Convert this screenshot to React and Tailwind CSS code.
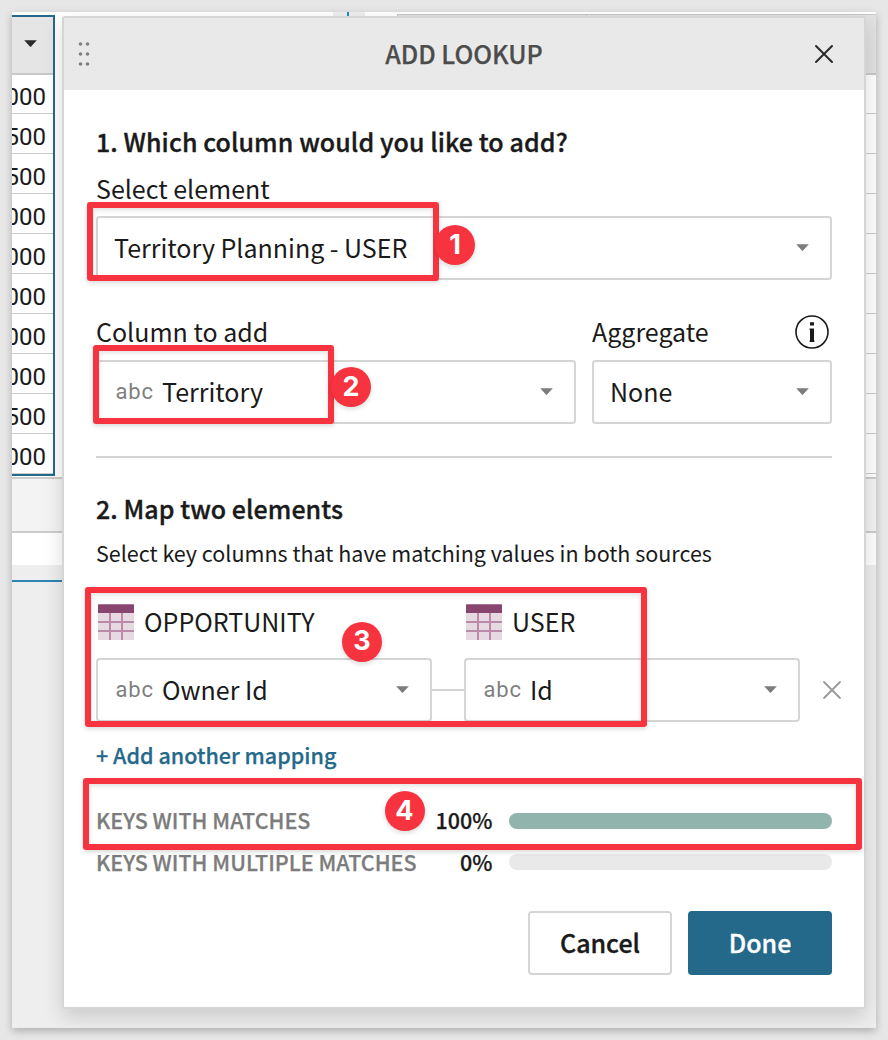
import React from 'react';

const ROWS = ['000', '500', '500', '000', '000', '000', '000', '000', '500', '000'];

function Caret({ className = 'text-[#7c7c7c]' }) {
  return (
    <svg className={`shrink-0 ${className}`} width="13" height="7" viewBox="0 0 13 7" aria-hidden="true">
      <path d="M0.2 0.3H12.8L7.1 6.4Q6.5 7 5.9 6.4Z" fill="currentColor" />
    </svg>
  );
}

function Cross({ className }) {
  return (
    <svg className={className} width="20" height="20" viewBox="0 0 20 20" fill="none" stroke="currentColor" strokeLinecap="round" aria-hidden="true">
      <path d="M2 2L18 18M18 2L2 18" />
    </svg>
  );
}

function TableIcon() {
  return (
    <svg className="ml-0.5 shrink-0" width="36" height="36" viewBox="0 0 36 36" aria-hidden="true">
      <rect width="36" height="36" rx="0.5" fill="#e6d9e2" />
      <path d="M12 9V36M24 9V36M0 18H36M0 27H36" stroke="#b98aaa" strokeWidth="2" />
      <rect width="36" height="9" fill="#88456e" />
      <path d="M0 0.5H36" stroke="#a87797" strokeWidth="1" />
    </svg>
  );
}

function InfoIcon() {
  return (
    <svg className="mt-0.5 mr-[3px]" width="34" height="34" viewBox="0 0 34 34" aria-hidden="true">
      <circle cx="17" cy="17" r="16" fill="none" stroke="#1a1a1a" strokeWidth="1.6" />
      <path d="M15 7.2H19V10.4H15ZM14.6 13.6H19V25.4H19.4V27H14.6V25.6H15V15H14.6Z" fill="#1a1a1a" />
    </svg>
  );
}

function Select({ type, value, className }) {
  return (
    <div className={`flex h-16 items-center rounded border-2 border-[#d5d5d5] bg-white pr-[21.5px] pl-4 pb-0.5 ${className}`}>
      {type && (
        <span className="w-12 shrink-0 pt-0.5 pl-[1.5px] font-[Roboto,sans-serif] text-[22px] leading-7 tracking-[0.8px] text-[#7f7f7f]">
          {type}
        </span>
      )}
      <span className="flex-1 leading-8">{value}</span>
      <Caret className="mt-px text-[#7c7c7c]" />
    </div>
  );
}

function MatchRow({ label, percent, fill, textClass = '' }) {
  return (
    <div className="flex h-7 items-center text-[21.5px] leading-7 font-medium [-webkit-text-stroke:0.25px]">
      <span className={`flex-1 text-[#7c7c7c] ${textClass}`}>{label}</span>
      <span className={textClass}>{percent}</span>
      <span className={`mt-0.5 ml-[16.5px] h-4 w-[323px] rounded-full ${fill}`} />
    </div>
  );
}

function Callout({ box, badge, number }) {
  return (
    <>
      <div className={`absolute rounded-[3px] border-6 border-[#f7333f] shadow-[0_2px_5px_rgba(0,0,0,0.15),inset_0_2px_5px_rgba(0,0,0,0.12)] ${box}`} />
      <div className={`absolute flex size-10 items-center justify-center rounded-full bg-[#f7333f] pb-0.5 font-[Inter,sans-serif] text-[27px] leading-none font-bold text-white shadow-[0_2px_5px_rgba(0,0,0,0.15)] ${badge}`}>
        {number}
      </div>
    </>
  );
}

function Workbook() {
  return (
    <div className="flex h-full flex-col">
      <div className="flex h-[465px] bg-white">
        <div className="w-[321px] pt-[3px]">
          <div className="flex h-[461px] w-[43px] flex-col border-t-2 border-r-2 border-b-2 border-[#25698a]">
            <div className="flex h-[58px] shrink-0 items-center justify-center border-b-2 border-[#c8c8c8] bg-[#e5e5e5] pr-[5px] pb-[3px]">
              <Caret className="text-[#2a2a2a]" />
            </div>
            {ROWS.map((value, i) => (
              <div
                key={i}
                className="flex h-10 shrink-0 justify-end overflow-hidden border-b border-[#cacaca] pt-[7px] pr-[7px] font-[Roboto,sans-serif] text-[24px] leading-8 nth-2:h-[39px] nth-2:pt-1.5"
              >
                {value}
              </div>
            ))}
          </div>
        </div>
        <div className="flex w-8 justify-center bg-[#eeeeee] pr-0.5">
          <div className="w-0.5 bg-[#2b86b3]" />
        </div>
        <div className="flex-1 pt-0.5 pl-8">
          <div className="flex h-[61px] border-t border-b-2 border-l border-[#c8c8c8] bg-[#e1e1e1]">
            <div className="w-[189px] border-r border-[#c8c8c8]" />
          </div>
          {ROWS.map((_, i) => (
            <div key={i} className="h-10 border-b border-[#cacaca] nth-2:h-[39px]" />
          ))}
        </div>
      </div>
      <div className="h-14 border-y-2 border-[#cccccc] bg-[#f3f3f3]" />
      <div className="h-8 bg-white" />
      <div className="h-[17px] w-[321px] border-b-2 border-[#2b86b3]" />
    </div>
  );
}

function LookupDialog() {
  return (
    <div className="absolute top-1 left-[50px] flex w-[804px] flex-col rounded-[3px] border-2 border-[#d5d5d5] bg-white shadow-[0_8px_20px_rgba(0,0,0,0.15)]">
      <div className="flex h-[72px] items-center justify-between bg-[#e9e9e9] pr-[30px] pl-3.5">
        <svg className="w-5 text-[#808080]" height="28" viewBox="0 0 20 28" fill="currentColor" aria-hidden="true">
          <circle cx="2.5" cy="4" r="1.8" />
          <circle cx="9.5" cy="4" r="1.8" />
          <circle cx="2.5" cy="14" r="1.8" />
          <circle cx="9.5" cy="14" r="1.8" />
          <circle cx="2.5" cy="24" r="1.8" />
          <circle cx="9.5" cy="24" r="1.8" />
        </svg>
        <h1 className="pb-0.5 pl-4 leading-8 font-medium text-[#4c4c4c] [-webkit-text-stroke:0.25px]">ADD LOOKUP</h1>
        <Cross className="stroke-2 text-[#2b2b2b]" />
      </div>

      <div className="flex flex-col px-8 pt-[35px] pb-8">
        <h2 className="leading-8 font-medium tracking-[0.08px] [-webkit-text-stroke:0.35px]">1. Which column would you like to add?</h2>
        <p className="mt-4 h-[31px] leading-[31px]">Select element</p>
        <Select className="mt-3" value="Territory Planning - USER" />

        <div className="mt-[35px] flex gap-4">
          <div className="w-[480px]">
            <p className="leading-8">Column to add</p>
            <Select className="mt-[13px]" type="abc" value="Territory" />
          </div>
          <div className="flex-1">
            <div className="flex h-8 items-center justify-between">
              <p className="leading-8">Aggregate</p>
              <InfoIcon />
            </div>
            <Select className="mt-[13px]" value="None" />
          </div>
        </div>

        <hr className="mt-8 border-t-2 border-[#d5d5d5]" />

        <h2 className="mt-[34px] leading-8 font-medium tracking-[0.05px] [-webkit-text-stroke:0.35px]">2. Map two elements</h2>
        <p className="mt-[15px] text-[21.5px] leading-7">Select key columns that have matching values in both sources</p>

        <div className="mt-[37px] flex h-9 items-center">
          <div className="flex w-[368px] items-center gap-2.5">
            <TableIcon />
            <span className="pb-0.5 leading-8">OPPORTUNITY</span>
          </div>
          <div className="flex items-center gap-2.5">
            <TableIcon />
            <span className="pb-0.5 leading-8">USER</span>
          </div>
        </div>
        <div className="mt-[18px] -mr-5 flex items-center">
          <Select className="w-[336px]" type="abc" value="Owner Id" />
          <div className="h-0.5 w-8 bg-[#d5d5d5]" />
          <Select className="w-[336px]" type="abc" value="Id" />
          <Cross className="ml-[22px] stroke-[1.8px] text-[#9a9a9a]" />
        </div>
        <p className="mt-[19px] text-[21.5px] leading-7 font-medium text-[#25698a] [-webkit-text-stroke:0.25px]">+ Add another mapping</p>

        <div className="mt-[37px] flex flex-col gap-[13px]">
          <MatchRow label="KEYS WITH MATCHES" percent="100%" fill="bg-[#91b5ac]" />
          <MatchRow label="KEYS WITH MULTIPLE MATCHES" percent="0%" fill="bg-[#e9e9e9]" textClass="pt-0.5" />
        </div>

        <div className="mt-9 flex justify-end gap-4">
          <button className="h-16 w-36 rounded border-2 border-[#d5d5d5] bg-white pb-0.5 leading-8 font-medium [-webkit-text-stroke:0.35px]">Cancel</button>
          <button className="h-16 w-36 rounded bg-[#25698a] pb-0.5 leading-8 font-medium text-white [-webkit-text-stroke:0.3px]">Done</button>
        </div>
      </div>
    </div>
  );
}

export default function App() {
  return (
    <div className="relative h-[1040px] w-[888px] overflow-hidden bg-[#e7e7e7] p-3 font-['Noto_Sans_CJK_SC','Source_Sans_Pro',sans-serif] text-[25px] text-[#1a1a1a]">
      <div className="h-[1016px] w-[864px] bg-[#eeeeee] shadow-[0_3px_8px_rgba(0,0,0,0.25)]">
        <div className="relative h-full overflow-hidden">
          <Workbook />
          <LookupDialog />
        </div>
      </div>
      <Callout number="1" box="top-[202px] left-[87px] h-[79px] w-[352px]" badge="top-[225px] left-[435px]" />
      <Callout number="2" box="top-[345px] left-[93px] h-[79px] w-[241px]" badge="top-[367px] left-[331px]" />
      <Callout number="3" box="top-[586.5px] left-[85px] h-[140.5px] w-[562px]" badge="top-[621.5px] left-[342px]" />
      <Callout number="4" box="top-[777.5px] left-[83px] h-[72.5px] w-[779px]" badge="top-[791px] left-[384.5px]" />
    </div>
  );
}
